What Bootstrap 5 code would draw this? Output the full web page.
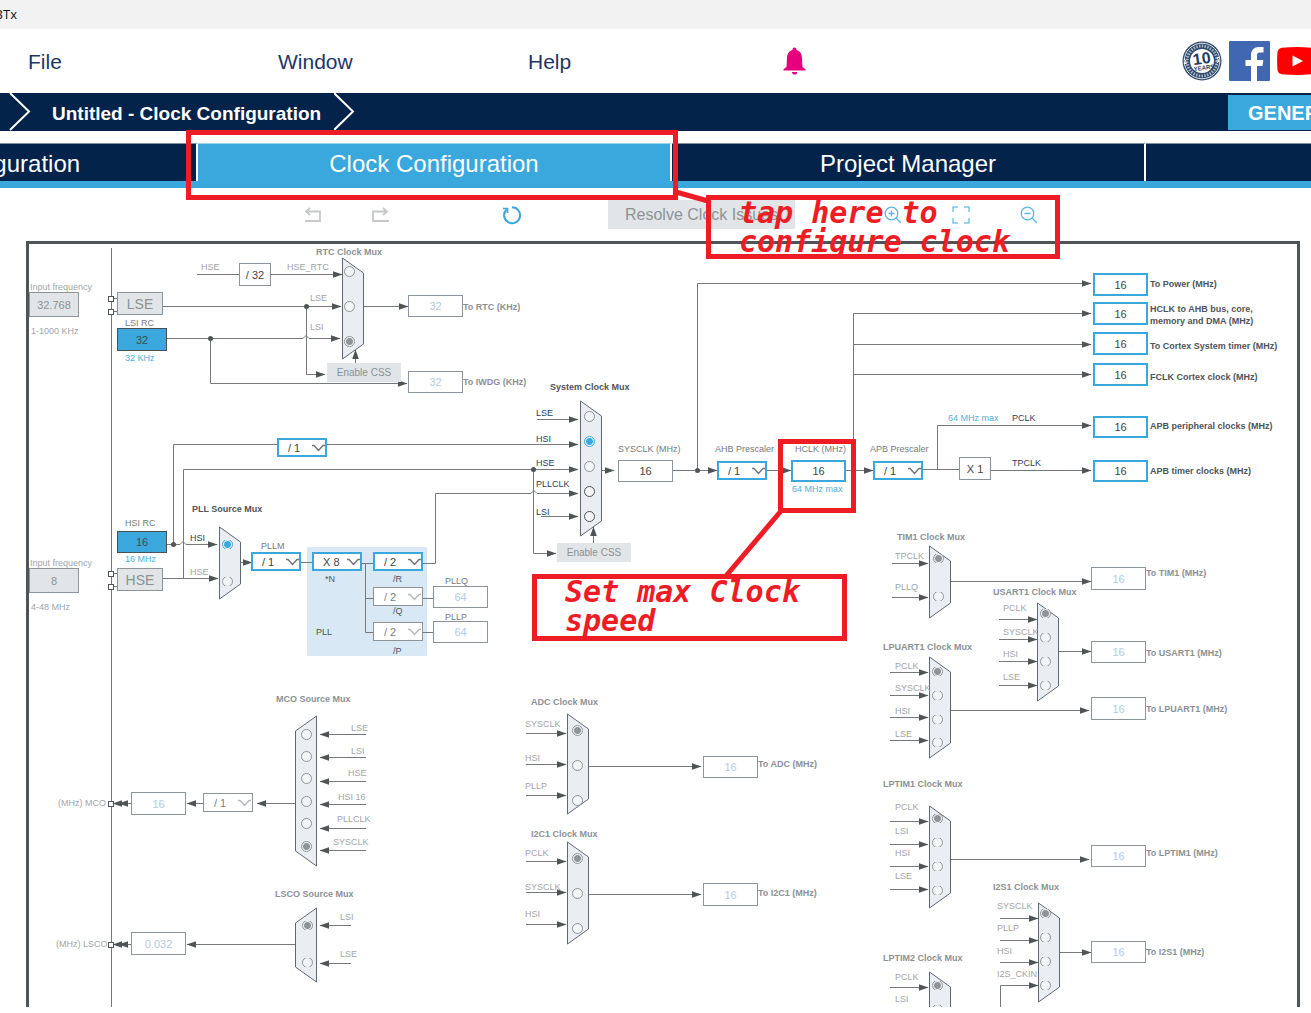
<!DOCTYPE html>
<html lang="en">
<head>
<meta charset="utf-8">
<meta name="viewport" content="width=device-width, initial-scale=1">
<title>Clock Configuration</title>
<link href="https://cdn.jsdelivr.net/npm/bootstrap@5.3.0/dist/css/bootstrap.min.css" rel="stylesheet">
<style>
:root { --navy: #03234b; --sky: #3aa8dc; --ink: #4f5456; --edge: #8d949a; --soft: #e1e5e8; --note: #ee1c25; }
body { font-family: "Liberation Sans", Arial, sans-serif; background: #fff; padding-bottom: 6px; }
.title-strip { height: 29px; background: #f2f2f2; }
.title-strip .window-name { width: 17px; font: 13px/29px "Open Sans", sans-serif; color: #111; white-space: nowrap; }
.menu-strip { height: 64px; padding-left: 28px; }
.menu-strip .menu-link { width: 250px; padding-top: 2px; font-size: 21px; line-height: 24px; color: #1f3566; text-decoration: none; }
.bell-btn { margin-left: 5px; }
.social { gap: 7px; margin-right: -6px; }
.crumb-strip { height: 38px; background: var(--navy); padding-left: 9px; }
.crumb-text { font-size: 19px; line-height: 24px; font-weight: bold; color: #fff; text-decoration: none; margin: 3px 13px 0 21px; }
.generate-btn { width: 300px; height: 35px; margin-right: -217px; padding: 2px 0 0 20px; border-radius: 0; border: 0; background: var(--sky); color: #fff; font-size: 20px; line-height: 24px; font-weight: bold; text-align: left; }
.tab-strip { margin-top: 12px; border-bottom: 7px solid var(--sky); }
.tab-strip .nav { margin-left: -276px; }
.tab-strip .nav-link { width: 474px; height: 38px; padding: 2px 0 0; border-radius: 0; border-right: 2px solid #fff; border-top: 1px solid #7f8fa5; background: var(--navy); color: #fff; font-size: 24px; line-height: 36px; text-align: center; }
.tab-strip .nav-link.active { background: var(--sky); border-top-color: #9dd3ee; }
.tool-strip { height: 53px; padding-left: 305px; }
.tool-strip svg { display: block; }
.history-tools { gap: 51px; }
.reset-tool { margin-left: 113px; }
.zoom-tools { gap: 50px; margin-left: 89px; }
.resolve-btn { width: 187px; height: 29px; margin-left: 86px; padding: 0; border: 0; border-radius: 0; background: var(--soft); color: #8e9397; font-size: 16px; line-height: 29px; }
.tree-panel { margin: 0 11px 0 26px; border: 3px solid var(--ink); border-bottom: 0; min-height: 0; }
.tree-stage { width: 1269px; height: 763px; }
.tree-stage > * { position: absolute; }
.tree-stage svg { left: 0; top: 0; }
.cap { font-size: 9px; line-height: 10px; white-space: nowrap; }
.cap-b { font-weight: bold; }
.c-lt { color: #a1a5a8; } .c-gy { color: #8c9195; } .c-md { color: #767b7f; } .c-dk { color: #4f5457; } .c-nv { color: #2b3f5c; } .c-bl { color: #4db2e2; }
.box { border: 1px solid var(--edge); border-radius: 0; background-color: #fff; color: #3f4447; font: 11px/16px "Liberation Sans", Arial, sans-serif; text-align: center; padding: 0; outline-offset: 0; }
.box-live { border: 2px solid var(--sky); }
.box-idle { color: #b3cae2; }
.box-off { background-color: var(--soft); color: #8c9195; }
.box-osc { background-color: var(--sky); border-color: #4a5054; color: #3f4a52; }
.box-key { font-size: 14px; }
.box-flat { border: 0; font-size: 10px; }
select.box { appearance: none; text-align: left; padding-left: 9px; background: #fff url("data:image/svg+xml,%3Csvg xmlns='http://www.w3.org/2000/svg' width='14' height='8'%3E%3Cpath d='M1 1.5h2L7.5 6.5L12 1.5h2' fill='none' stroke='%2370757a' stroke-width='1.4'/%3E%3C/svg%3E") no-repeat right 0 center; }
select.box-div { padding-left: 10px; color: #7d8286; background-image: url("data:image/svg+xml,%3Csvg xmlns='http://www.w3.org/2000/svg' width='14' height='8'%3E%3Cpath d='M0 1.5h2L6.5 6.5L11 1.5h2' fill='none' stroke='%23b5b9bc' stroke-width='1.4'/%3E%3C/svg%3E"); }
.pick { appearance: none; width: 11px; height: 11px; margin: 0; border: 1px solid #8f9498; border-radius: 50%; background: #f3f5f7; }
.pick:checked { background: radial-gradient(circle, #8f9498 0 3px, #f3f5f7 4px); }
.pick-cut { clip-path: inset(1px 0); }
.pick-live:checked { border-color: var(--sky); background: radial-gradient(circle, var(--sky) 0 3px, #f3f5f7 4px); }
.pick-dark { border-color: #4a5054; }
.notes { position: absolute; inset: 0; overflow: hidden; pointer-events: none; }
.notes > * { position: absolute; }
.note-frame { border: 5px solid var(--note); }
.note-text { color: var(--note); font: italic bold 30px/29px "DejaVu Sans Mono", monospace; white-space: pre; padding-left: 28px; }
.note-text p { margin: -2px 0 0; }
.note-tab { left: 186px; top: 130px; width: 492px; height: 70px; }
.note-tap { left: 706px; top: 195px; width: 354px; height: 64px; }
.note-hclk { left: 778px; top: 439px; width: 78px; height: 74px; }
.note-speed { left: 532px; top: 574px; width: 315px; height: 67px; }
</style>
</head>
<body class="d-flex flex-column vh-100 overflow-hidden position-relative">

<header class="flex-shrink-0">
  <div class="title-strip"><div class="window-name d-flex justify-content-end overflow-hidden"><span>STM32G030K6Tx NUCLEO-BTx</span></div></div>

  <nav class="menu-strip d-flex align-items-center overflow-hidden" aria-label="Main menu">
    <a class="menu-link" href="#">File</a>
    <a class="menu-link" href="#">Window</a>
    <a class="menu-link" href="#">Help</a>
    <button class="bell-btn btn p-0 border-0 lh-1" type="button" aria-label="Notifications">
      <svg width="23" height="28" viewBox="0 0 23 28" fill="#e6007e"><path d="M11.500 0.500c1.200 0 2 .8 2 2v.6c3.800 1 5.500 4.200 5.500 8.400L19.500 20l3 2.200v1.300H.5v-1.300l3-2.200L4 11.500c0-4.200 1.700-7.400 5.500-8.400v-.6c0-1.200.8-2 2-2z"/><path d="M9 25h5.200c0 1.600-1 2.600-2.600 2.600S9 26.600 9 25z"/></svg>
    </button>
    <div class="social d-flex align-items-center ms-auto">
      <a href="#" class="lh-1" aria-label="Ten years of community">
        <svg width="40" height="40" viewBox="0 0 40 40">
          <circle cx="20" cy="20" r="19.500" fill="#2f4a6b"/>
          <circle cx="20" cy="20" r="17.800" fill="none" stroke="#dfe5eb" stroke-width="1"/>
          <circle cx="20" cy="20" r="15" fill="none" stroke="#a9b6c6" stroke-width="3" stroke-dasharray="1.500 1.300"/>
          <circle cx="20" cy="20" r="12" fill="#fff"/>
          <path d="M2 18l2 2-2 3 3-1M38 16l-3 1 2 3-2 2" stroke="#fff" fill="none"/>
          <g transform="rotate(-8 20 20)" fill="#1d3a60" font-family="Liberation Sans, Arial, sans-serif" font-weight="bold" text-anchor="middle"><text x="20" y="23" font-size="16">10</text><text x="21" y="29" font-size="6">YEARS</text></g>
        </svg></a>
      <a href="#" class="lh-1" aria-label="Facebook">
        <svg width="41" height="40" viewBox="0 0 41 40"><rect width="41" height="40" rx="1" fill="#4267b2"/><path d="M22 40V25h-5.500v-6H22v-4.500C22 9 25 6 30 6h4.500v5.500H31c-2.200 0-3 1-3 3V19h6.300l-.8 6H28v15z" fill="#fff"/></svg></a>
      <a href="#" class="lh-1" aria-label="YouTube">
        <svg width="40" height="28" viewBox="0 0 40 28"><path d="M5 .8Q20-.6 35 .8q4 .5 4.500 4.500.8 8.700 0 17.400-.5 4-4.500 4.500-15 1.400-30 0-4-.5-4.500-4.500-.8-8.700 0-17.400Q1 1.300 5 .8z" fill="#f00"/><path d="M15.500 8.500v11L26 14z" fill="#fff"/></svg></a>
    </div>
  </nav>

  <div class="crumb-strip d-flex align-items-center overflow-hidden">
    <svg width="22" height="38" viewBox="0 0 22 38" fill="none" stroke="#fff" stroke-width="2"><path d="M1 0L20 18.500L1 37"/></svg>
    <a class="crumb-text" href="#">Untitled - Clock Configuration</a>
    <svg width="22" height="38" viewBox="0 0 22 38" fill="none" stroke="#fff" stroke-width="2"><path d="M0 0L19 18.500L0 37"/></svg>
    <button class="generate-btn btn ms-auto flex-shrink-0" type="button">GENERATE CODE</button>
  </div>

  <div class="tab-strip overflow-hidden">
    <div class="nav flex-nowrap">
      <a class="nav-link flex-shrink-0" href="#">Pinout &amp; Configuration</a>
      <a class="nav-link flex-shrink-0 active" aria-current="page" href="#">Clock Configuration</a>
      <a class="nav-link flex-shrink-0" href="#">Project Manager</a>
      <a class="nav-link flex-shrink-0" href="#" aria-label="Tools"></a>
    </div>
  </div>

  <div class="tool-strip d-flex align-items-center">
    <div class="history-tools d-flex">
      <button class="btn p-0 border-0" type="button" aria-label="Undo"><svg width="16" height="16" viewBox="0 0 16 16" fill="none" stroke="#c6c8ca" stroke-width="1.800"><path d="M1 4.500h14v9.500H0M5 1L1 4.500L5 8"/></svg></button>
      <button class="btn p-0 border-0" type="button" aria-label="Redo"><svg width="17" height="16" viewBox="0 0 17 16" fill="none" stroke="#c6c8ca" stroke-width="1.800"><path d="M15 4.500H1v9.500h16M11 1l4 3.500L11 8"/></svg></button>
    </div>
    <button class="reset-tool btn p-0 border-0" type="button" aria-label="Reset clock configuration"><svg width="20" height="20" viewBox="0 0 20 20" fill="none" stroke="#3aa8dc" stroke-width="2"><path d="M4.500 4.500A8 8 0 1 0 10 2.200"/><path d="M1 3.500h4.500V8" stroke-width="1.600"/></svg></button>
    <button class="resolve-btn btn" type="button">Resolve Clock Issues</button>
    <div class="zoom-tools d-flex">
      <button class="btn p-0 border-0" type="button" aria-label="Zoom in"><svg width="18" height="18" viewBox="0 0 18 18" fill="none" stroke="#5bb7e2" stroke-width="1.300"><circle cx="7.500" cy="7.500" r="6.300"/><path d="M12 12l5 5M4.500 7.500h6M7.500 4.500v6"/></svg></button>
      <button class="btn p-0 border-0" type="button" aria-label="Fit to window"><svg width="18" height="18" viewBox="0 0 18 18" fill="none" stroke="#7cc5e8" stroke-width="1.500"><path d="M1 6V1h5M12 1h5v5M17 12v5h-5M6 17H1v-5"/></svg></button>
      <button class="btn p-0 border-0" type="button" aria-label="Zoom out"><svg width="18" height="18" viewBox="0 0 18 18" fill="none" stroke="#5bb7e2" stroke-width="1.300"><circle cx="7.500" cy="7.500" r="6.300"/><path d="M12 12l5 5M4.500 7.500h6"/></svg></button>
    </div>
  </div>
</header>

<main class="tree-panel flex-grow-1 overflow-hidden">
  <div class="tree-stage position-relative" id="stage">
    <svg id="wires" width="1269" height="763" viewBox="29 244 1269 763" aria-hidden="true"></svg>
  </div>
</main>

<div class="notes">
  <svg width="100%" height="100%" stroke="#ee1c25" fill="none"><path d="M676 192L708 201" stroke-width="5"/><path d="M781 511L725 577" stroke-width="5"/></svg>
  <div class="note-frame note-tab"></div>
  <div class="note-frame note-hclk"></div>
  <div class="note-frame note-tap note-text"><p>tap here to
configure clock</p></div>
  <div class="note-frame note-speed note-text"><p>Set max Clock
speed</p></div>
</div>

<script>
// Origin of the clock tree's drawing coordinates.
const OX = 29, OY = 244;
const stage = document.getElementById('stage');
const wires = document.getElementById('wires');

function place(el, x, y, w, h) {
  el.style.left = (x - OX) + 'px';
  el.style.top = (y - OY) + 'px';
  if (w) { el.style.width = w + 'px'; el.style.height = h + 'px'; }
  stage.appendChild(el);
}

// Captions: x, vertical centre, text, classes, id of the control they name
function caption(x, cy, text, cls, target) {
  const el = document.createElement(target ? 'label' : 'span');
  if (target) el.htmlFor = target;
  el.className = 'cap ' + cls;
  el.textContent = text;
  place(el, x, cy - 5);
}

// Boxes: kind, id, x, y, width, height, value, classes
const boxes = [
  ['input','lse-freq',29,292,50,25,'32.768','box-off'],
  ['button','lse',117,292,46,23,'LSE','box-off box-key'],
  ['input','lsi-rc',117,328,50,23,'32','box-osc'],
  ['input','rtc-div',239,263,32,23,'/ 32',''],
  ['input','rtc-out',408,295,55,22,'32','box-idle'],
  ['button','rtc-css',327,363,74,19,'Enable CSS','box-off box-flat'],
  ['input','iwdg-out',408,371,55,22,'32','box-idle'],
  ['select','hsi-div',277,438,50,19,'/ 1','box-live'],
  ['input','hsi-rc',117,531,50,22,'16','box-osc'],
  ['button','hse',117,568,46,23,'HSE','box-off box-key'],
  ['input','hse-freq',29,568,50,25,'8','box-off'],
  ['select','pllm',251,552,50,19,'/ 1','box-live'],
  ['select','plln',312,552,50,19,'X 8','box-live'],
  ['select','pllr',373,552,50,19,'/ 2','box-live'],
  ['select','pllq-div',373,587,50,19,'/ 2','box-div'],
  ['select','pllp-div',373,622,50,19,'/ 2','box-div'],
  ['input','pllq',433,586,55,22,'64','box-idle'],
  ['input','pllp',433,621,55,22,'64','box-idle'],
  ['input','sysclk',618,460,55,22,'16',''],
  ['button','sys-css',557,543,74,19,'Enable CSS','box-off box-flat'],
  ['select','ahb',717,461,50,19,'/ 1','box-live'],
  ['input','hclk',791,460,55,22,'16','box-live'],
  ['select','apb',873,461,50,19,'/ 1','box-live'],
  ['input','apb-mul',959,457,32,23,'X 1',''],
  ['input','o-power',1093,273,55,23,'16','box-live'],
  ['input','o-ahb',1093,302,55,23,'16','box-live'],
  ['input','o-systick',1093,332,55,23,'16','box-live'],
  ['input','o-fclk',1093,363,55,23,'16','box-live'],
  ['input','o-apb',1093,416,55,22,'16','box-live'],
  ['input','o-apbtim',1093,460,55,22,'16','box-live'],
  ['input','o-tim1',1091,567,55,23,'16','box-idle'],
  ['input','o-usart1',1091,641,55,22,'16','box-idle'],
  ['input','o-lpuart1',1091,697,55,23,'16','box-idle'],
  ['input','o-lptim1',1091,845,55,22,'16','box-idle'],
  ['input','o-i2s1',1091,941,55,22,'16','box-idle'],
  ['input','o-adc',703,756,55,22,'16','box-idle'],
  ['input','o-i2c1',703,883,55,23,'16','box-idle'],
  ['input','mco',131,792,55,23,'16','box-idle'],
  ['select','mco-div',203,793,50,19,'/ 1','box-div'],
  ['input','lsco',131,932,55,23,'0.032','box-idle']
];

const captions = [
  [201,267,'HSE','c-lt'], [287,267,'HSE_RTC','c-lt','m0-0'],
  [30,287,'Input frequency','c-lt','lse-freq'], [31,331,'1-1000 KHz','c-lt'],
  [125,323,'LSI RC','c-md','lsi-rc'], [125,358,'32 KHz','c-bl'],
  [463,307,'To RTC (KHz)','c-gy cap-b','rtc-out'], [463,382,'To IWDG (KHz)','c-gy cap-b','iwdg-out'],
  [125,523,'HSI RC','c-md','hsi-rc'], [125,559,'16 MHz','c-bl'],
  [30,563,'Input frequency','c-lt','hse-freq'], [31,607,'4-48 MHz','c-lt'],
  [261,546,'PLLM','c-md','pllm'], [325,579,'*N','c-dk','plln'], [393,579,'/R','c-dk','pllr'],
  [393,611,'/Q','c-dk','pllq-div'], [393,651,'/P','c-dk','pllp-div'], [316,632,'PLL','c-dk'],
  [445,581,'PLLQ','c-md','pllq'], [445,617,'PLLP','c-md','pllp'],
  [618,449,'SYSCLK (MHz)','c-md','sysclk'], [715,449,'AHB Prescaler','c-md','ahb'],
  [795,449,'HCLK (MHz)','c-md','hclk'], [870,449,'APB Prescaler','c-md','apb'],
  [792,489,'64 MHz max','c-bl'], [948,418,'64 MHz max','c-bl'],
  [1012,418,'PCLK','c-nv'], [1012,463,'TPCLK','c-nv'],
  [1150,284,'To Power (MHz)','c-dk cap-b','o-power'],
  [1150,309,'HCLK to AHB bus, core,','c-dk cap-b','o-ahb'], [1150,321,'memory and DMA (MHz)','c-dk cap-b','o-ahb'],
  [1150,346,'To Cortex System timer (MHz)','c-dk cap-b','o-systick'],
  [1150,377,'FCLK Cortex clock (MHz)','c-dk cap-b','o-fclk'],
  [1150,426,'APB peripheral clocks (MHz)','c-dk cap-b','o-apb'],
  [1150,471,'APB timer clocks (MHz)','c-dk cap-b','o-apbtim'],
  [1146,573,'To TIM1 (MHz)','c-gy cap-b','o-tim1'], [1146,653,'To USART1 (MHz)','c-gy cap-b','o-usart1'],
  [1146,709,'To LPUART1 (MHz)','c-gy cap-b','o-lpuart1'], [1146,853,'To LPTIM1 (MHz)','c-gy cap-b','o-lptim1'],
  [1146,952,'To I2S1 (MHz)','c-gy cap-b','o-i2s1'],
  [758,764,'To ADC (MHz)','c-gy cap-b','o-adc'], [758,893,'To I2C1 (MHz)','c-gy cap-b','o-i2c1'],
  [58,803,'(MHz) MCO','c-lt','mco'], [56,944,'(MHz) LSCO','c-lt','lsco']
];

// Multiplexers: title, its place and class; shape x, top, bottom; radio x;
// inputs [name, label x, label y, radio y, selected, radio class]
const muxes = [
  { t:['RTC Clock Mux',316,252,'c-gy'], s:[342,258,359], rx:349, c:'c-lt', k:'',
    i:[['',0,0,271],['LSE',310,298,306],['LSI',310,327,341,1]] },
  { t:['System Clock Mux',550,387,'c-dk'], s:[580,401,536], rx:589, c:'c-nv', k:'pick-live',
    i:[['LSE',536,413,416],['HSI',536,439,441,1],['HSE',536,463,466],['PLLCLK',536,484,491,0,'pick-dark'],['LSI',536,512,516,0,'pick-dark']] },
  { t:['PLL Source Mux',192,509,'c-dk'], s:[219,527,599], rx:227, c:'c-lt', k:'pick-cut pick-live',
    i:[['HSI',190,538,544,1],['HSE',190,572,581]] },
  { t:['TIM1 Clock Mux',897,537,'c-gy'], s:[929,546,618], rx:938, c:'c-lt', k:'pick-cut',
    i:[['TPCLK',895,556,558,1],['PLLQ',895,587,596]] },
  { t:['USART1 Clock Mux',993,592,'c-gy'], s:[1037,603,701], rx:1045, c:'c-lt', k:'pick-cut',
    i:[['PCLK',1003,608,613,1],['SYSCLK',1003,632,637],['HSI',1003,654,661],['LSE',1003,677,685]] },
  { t:['LPUART1 Clock Mux',883,647,'c-gy'], s:[929,657,758], rx:937, c:'c-lt', k:'pick-cut',
    i:[['PCLK',895,666,671,1],['SYSCLK',895,688,695],['HSI',895,711,719],['LSE',895,734,742]] },
  { t:['LPTIM1 Clock Mux',883,784,'c-gy'], s:[929,806,908], rx:937, c:'c-lt', k:'pick-cut',
    i:[['PCLK',895,807,818,1],['LSI',895,831,842],['HSI',895,853,866],['LSE',895,876,890]] },
  { t:['I2S1 Clock Mux',993,887,'c-gy'], s:[1038,903,1002], rx:1045, c:'c-lt', k:'pick-cut',
    i:[['SYSCLK',997,906,913,1],['PLLP',997,928,937],['HSI',997,951,961],['I2S_CKIN',997,974,985]] },
  { t:['LPTIM2 Clock Mux',883,958,'c-gy'], s:[929,972,1073], rx:937, c:'c-lt', k:'pick-cut',
    i:[['PCLK',895,977,985,1],['LSI',895,999,1009]] },
  { t:['ADC Clock Mux',531,702,'c-gy'], s:[567,714,814], rx:577, c:'c-lt', k:'',
    i:[['SYSCLK',525,724,730,1],['HSI',525,758,765],['PLLP',525,786,800]] },
  { t:['I2C1 Clock Mux',531,834,'c-gy'], s:[567,842,944], rx:577, c:'c-lt', k:'',
    i:[['PCLK',525,853,858,1],['SYSCLK',525,887,893],['HSI',525,914,928]] },
  { t:['MCO Source Mux',276,699,'c-gy'], s:[317,716,866,1], rx:306, c:'c-lt', k:'',
    i:[['LSE',351,728,734],['LSI',351,751,756],['HSE',348,773,778],['HSI 16',338,797,801],['PLLCLK',337,819,823],['SYSCLK',333,842,846,1]] },
  { t:['LSCO Source Mux',275,894,'c-gy'], s:[317,908,982,1], rx:307, c:'c-lt', k:'pick-cut',
    i:[['LSI',340,917,925,1],['LSE',340,954,962]] }
];

// Wires that end in an arrowhead, then plain ones
const arrows = [
  'M271 274.500H342','M163 306.500H341','M167 338.500H303l3-3l3 3H340','M306.500 306V374.500H325','M210.500 338V383.500H407',
  'M364 306.500H408','M355.500 363V350','M537 419.500H578','M327 444.500H578','M183.500 578V469.500H578',
  'M533.500 469V553.500H556','M423 563.500H435.500V493.500H531l3-3l3 3H578','M541 516.500H578','M602 470.500H614','M593.500 543V527',
  'M167 544.500H180l3-3l3 3H217','M163 578.500H218','M241 562.500H252','M673 470.500H717','M697.500 470V283.500H1091',
  'M767 470.500H791','M846 470.500H873','M853.500 470V313.500H1091','M853 344.500H1091','M853 374.500H1091',
  'M937.500 469V425.500H1091','M991 470.500H1091','M951 581.500H1091','M1059 651.500H1091','M951 710.500H1089',
  'M951 859.500H1089','M1060 952.500H1091','M1000.500 1010V985.500H1038','M589 766.500H701','M589 894.500H701',
  'M295 803.500H257','M203 803.500H187','M131 803.500H113','M131 803.500H119','M295 944.500H187','M131 944.500H113','M131 944.500H119'
];
[563,597].forEach(y => arrows.push(`M892 ${y}.5H928`));
[619,639,661,685].forEach(y => arrows.push(`M999 ${y}.5H1037`));
[672,695,717,740,821,844,866,889,987].forEach(y => arrows.push(`M890 ${y}.5H928`));
[918,940,962].forEach(y => arrows.push(`M1000 ${y}.5H1038`));
[733,764,795,861,892,924].forEach(y => arrows.push(`M526 ${y}.5H566`));
[734,757,781,804,828,850].forEach(y => arrows.push(`M366 ${y}.5H320`));
[925,963].forEach(y => arrows.push(`M351 ${y}.5H320`));
const plain = 'M111.500 248V1010M197 274.500H239M173.500 544V444.500H277M301 562.500H312M362 563.500H373M365.500 563V632.500H373M365 598.500H373M423 598.500H433M423 632.500H433M923 469.500H959M112 298.500H117M112 311.500H117M112 573.500H117M112 586.500H117';

let art = '<defs><marker id="head" markerUnits="userSpaceOnUse" markerWidth="10" markerHeight="8" refX="9" refY="4" orient="auto"><path d="M0 .7L9.500 4L0 7.300z" fill="#4f5456"/></marker></defs>';
art += '<rect x="307" y="547" width="120" height="109" rx="1" fill="#d8e8f5"/>';
muxes.forEach(m => {
  const [x, a, b, flip] = m.s, dx = flip ? -1 : 0, e = (flip ? x - 22 : x + 21);
  art += `<path d="M${x + dx}.5 ${a}L${e}.5 ${a + 15}V${b - 15}L${x + dx}.5 ${b}z" fill="#eaeef2" stroke="#5f6873"/>`;
});
art += `<g fill="none" stroke="#75797b"><path d="${plain}"/>` + arrows.map(d => `<path d="${d}" marker-end="url(#head)"/>`).join('') + '</g>';
[[306.5,306.5],[210.5,338.5],[173.5,544.5],[533.5,469.5],[697.5,470.5]].forEach(p => art += `<circle cx="${p[0]}" cy="${p[1]}" r="2.500" fill="#4f5456"/>`);
[298,311,573,586,803,944].forEach(y => art += `<rect x="108.500" y="${y - 2}.5" width="5" height="5" fill="#fff" stroke="#4f5456"/>`);
wires.innerHTML = art;

boxes.forEach(([kind, id, x, y, w, h, value, cls]) => {
  const el = document.createElement(kind);
  el.id = id;
  el.className = 'box ' + cls;
  if (kind === 'input') { el.type = 'text'; el.value = value; }
  else if (kind === 'select') el.add(new Option(value));
  else { el.type = 'button'; el.textContent = value; }
  if (!captions.some(c => c[4] === id) && kind !== 'button') el.setAttribute('aria-label', id);
  place(el, x, y, w, h);
});
muxes.forEach((m, n) => {
  const [title, tx, ty, tc] = m.t;
  caption(tx, ty, title, 'cap-b ' + tc);
  m.i.forEach(([name, lx, ly, ry, on, extra], j) => {
    const r = document.createElement('input');
    r.type = 'radio'; r.name = 'm' + n; r.id = `m${n}-${j}`; r.checked = !!on;
    r.className = `pick ${m.k} ${extra || ''}`;
    place(r, m.rx - 5, ry - 5);
    if (name) caption(lx, ly, name, n === 2 && on ? 'c-nv' : m.c, r.id);
  });
});
captions.forEach(c => caption(...c));
</script>
<script src="https://cdn.jsdelivr.net/npm/bootstrap@5.3.0/dist/js/bootstrap.bundle.min.js"></script>
</body>
</html>
